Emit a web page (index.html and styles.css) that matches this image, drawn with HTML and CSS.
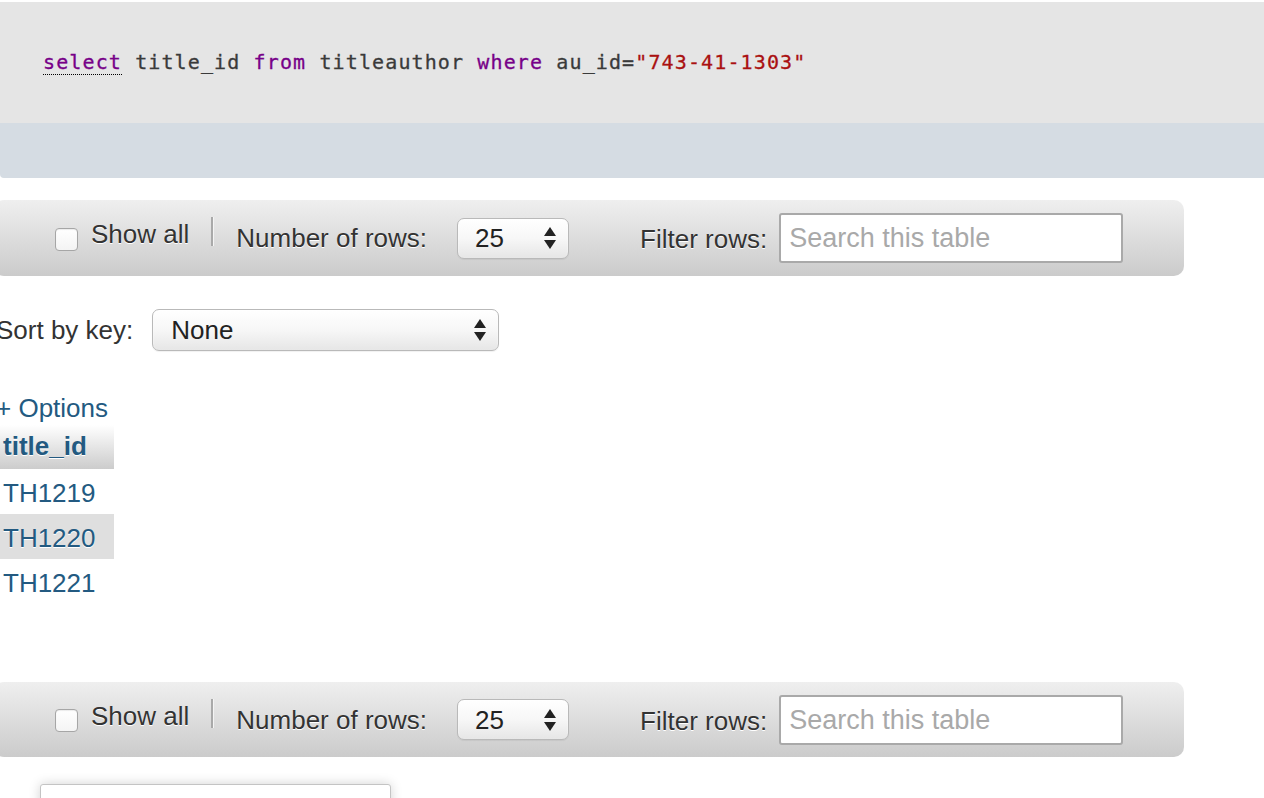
FILE: index.html
```html
<!DOCTYPE html>
<html>
<head>
<meta charset="utf-8">
<link rel="stylesheet" href="styles.css">
</head>
<body>
<div class="sql">
  <div class="sql-code"><code><span class="kw dotted">select</span> title_id <span class="kw">from</span> titleauthor <span class="kw">where</span> au_id=<span class="str">"743-41-1303"</span></code></div>
  <div class="sql-foot"></div>
</div>
<div class="main">
  <div class="navbar">
    <span class="checkbox"></span>
    <span class="showall">Show all</span>
    <span class="sep"></span>
    <span class="numrows">Number of rows:</span>
    <div class="select small"><span>25</span>
      <svg class="arrows" width="12" height="22" viewBox="0 0 12 22"><polygon points="0,9 6,0 12,9" fill="#222"/><polygon points="0,13 12,13 6,22" fill="#222"/></svg>
    </div>
    <span class="filter">Filter rows:</span>
    <div class="search">Search this table</div>
  </div>

  <div class="sortrow">
    <span class="sortlabel">Sort by key:</span>
    <div class="select wide"><span>None</span>
      <svg class="arrows" width="12" height="22" viewBox="0 0 12 22"><polygon points="0,9 6,0 12,9" fill="#222"/><polygon points="0,13 12,13 6,22" fill="#222"/></svg>
    </div>
  </div>

  <div class="options"><a class="link">+ Options</a></div>

  <table class="results">
    <thead><tr><th>title_id</th></tr></thead>
    <tbody>
      <tr><td>TH1219</td></tr>
      <tr class="alt"><td>TH1220</td></tr>
      <tr><td>TH1221</td></tr>
    </tbody>
  </table>

  <div class="navbar bottom">
    <span class="checkbox"></span>
    <span class="showall">Show all</span>
    <span class="sep"></span>
    <span class="numrows">Number of rows:</span>
    <div class="select small"><span>25</span>
      <svg class="arrows" width="12" height="22" viewBox="0 0 12 22"><polygon points="0,9 6,0 12,9" fill="#222"/><polygon points="0,13 12,13 6,22" fill="#222"/></svg>
    </div>
    <span class="filter">Filter rows:</span>
    <div class="search">Search this table</div>
  </div>

  <div class="bottombox"></div>
</div>
</body>
</html>
```

FILE: styles.css
```css
html, body {
  margin: 0;
  padding: 0;
  background: #ffffff;
  overflow: hidden;
  height: 798px;
}
body {
  font-family: "Liberation Sans", Arial, sans-serif;
  font-size: 26px;
  line-height: 30px;
  color: #333333;
}

/* SQL box */
.sql {
  margin-top: 2px;
  width: 1280px;
  border-bottom-left-radius: 4px;
  overflow: hidden;
}
.sql-code {
  background: #e5e5e5;
  height: 121px;
  box-sizing: border-box;
  padding: 43px 0 0 43px;
}
.sql-code code {
  font-family: "DejaVu Sans Mono", monospace;
  font-size: 20px;
  line-height: 30px;
  letter-spacing: 1.12px;
  color: #3a3a3a;
  white-space: pre;
  -webkit-text-stroke: 0.3px currentColor;
}
.kw { color: #770088; }
.str { color: #aa1111; }
.dotted {
  border-bottom: 1px dotted #000000;
}
.sql-foot {
  background: #d5dce3;
  height: 55px;
}

.main {
  margin-left: -4px;
}

/* navigation bar */
.navbar {
  margin-top: 22px;
  margin-left: -2px;
  width: 1190px;
  height: 76px;
  box-sizing: border-box;
  border-radius: 10px;
  background: linear-gradient(#efefef, #cbcbcb);
  display: flex;
  align-items: center;
  padding-left: 61px;
  text-shadow: 0 1px 0 #ffffff;
}
.navbar.bottom {
  margin-top: 78px;
  height: 75px;
}
.checkbox {
  width: 21px;
  height: 21px;
  border: 1px solid #a6a6a6;
  border-radius: 4px;
  background: linear-gradient(#ffffff, #f4f4f4);
  box-shadow: inset 0 1px 1px rgba(0,0,0,0.08);
  margin-top: 2px;
}
.showall {
  margin-left: 13px;
  margin-bottom: 8px;
}
.sep {
  width: 2px;
  height: 29px;
  background: #a9a9a9;
  border-right: 1px solid #f4f4f4;
  margin-left: 22px;
  margin-bottom: 13px;
}
.numrows {
  margin-left: 22px;
}
.select {
  box-sizing: border-box;
  border: 1px solid #b9b9b9;
  border-radius: 7px;
  background: linear-gradient(#ffffff 0%, #f7f7f7 50%, #e6e6e6 100%);
  box-shadow: inset 0 1px 2px rgba(255,255,255,0.9), 0 1px 1px rgba(0,0,0,0.06);
  display: flex;
  align-items: center;
  justify-content: space-between;
  color: #222222;
  text-shadow: none;
}
.select.small {
  width: 112px;
  height: 41px;
  margin-left: 30px;
  padding: 0 12px 0 17px;
}
.select.wide {
  width: 347px;
  height: 42px;
  margin-left: 19px;
  padding: 0 12px 0 18px;
}
.arrows {
  display: block;
}
.filter {
  margin-left: 71px;
  margin-top: 2px;
}
.search {
  box-sizing: border-box;
  width: 344px;
  height: 50px;
  margin-left: 12px;
  border: 2px solid #a9a9a9;
  border-radius: 3px;
  background: #ffffff;
  color: #a9a9a9;
  font-size: 27px;
  line-height: 46px;
  padding-left: 8px;
  text-shadow: none;
}

/* sort row */
.sortrow {
  margin-top: 33px;
  height: 42px;
  display: flex;
  align-items: center;
}
.sortlabel {
  color: #333333;
}

/* options */
.options {
  margin-top: 42px;
  margin-bottom: 2px;
  line-height: 30px;
}
.link {
  color: #235a81;
  text-decoration: none;
}

/* results table */
.results {
  border-collapse: collapse;
  border-spacing: 0;
}
.results th {
  width: 103px;
  text-align: left;
  padding: 6px 8px 8px 7px;
  line-height: 30px;
  font-weight: bold;
  color: #235a81;
  background: linear-gradient(#ffffff, #cccccc);
  text-shadow: 0 1px 0 #ffffff;
}
.results td {
  padding: 9px 8px 6px 7px;
  line-height: 30px;
  color: #235a81;
}
.results tr.alt td {
  background: #dfdfdf;
  text-shadow: 0 1px 0 #ffffff;
}

/* bottom box */
.bottombox {
  margin-top: 27px;
  margin-left: 44px;
  width: 351px;
  height: 60px;
  box-sizing: border-box;
  border: 1px solid #c4c4c4;
  border-radius: 3px;
  background: #ffffff;
  box-shadow: 0 0 12px rgba(0,0,0,0.18);
}
```
